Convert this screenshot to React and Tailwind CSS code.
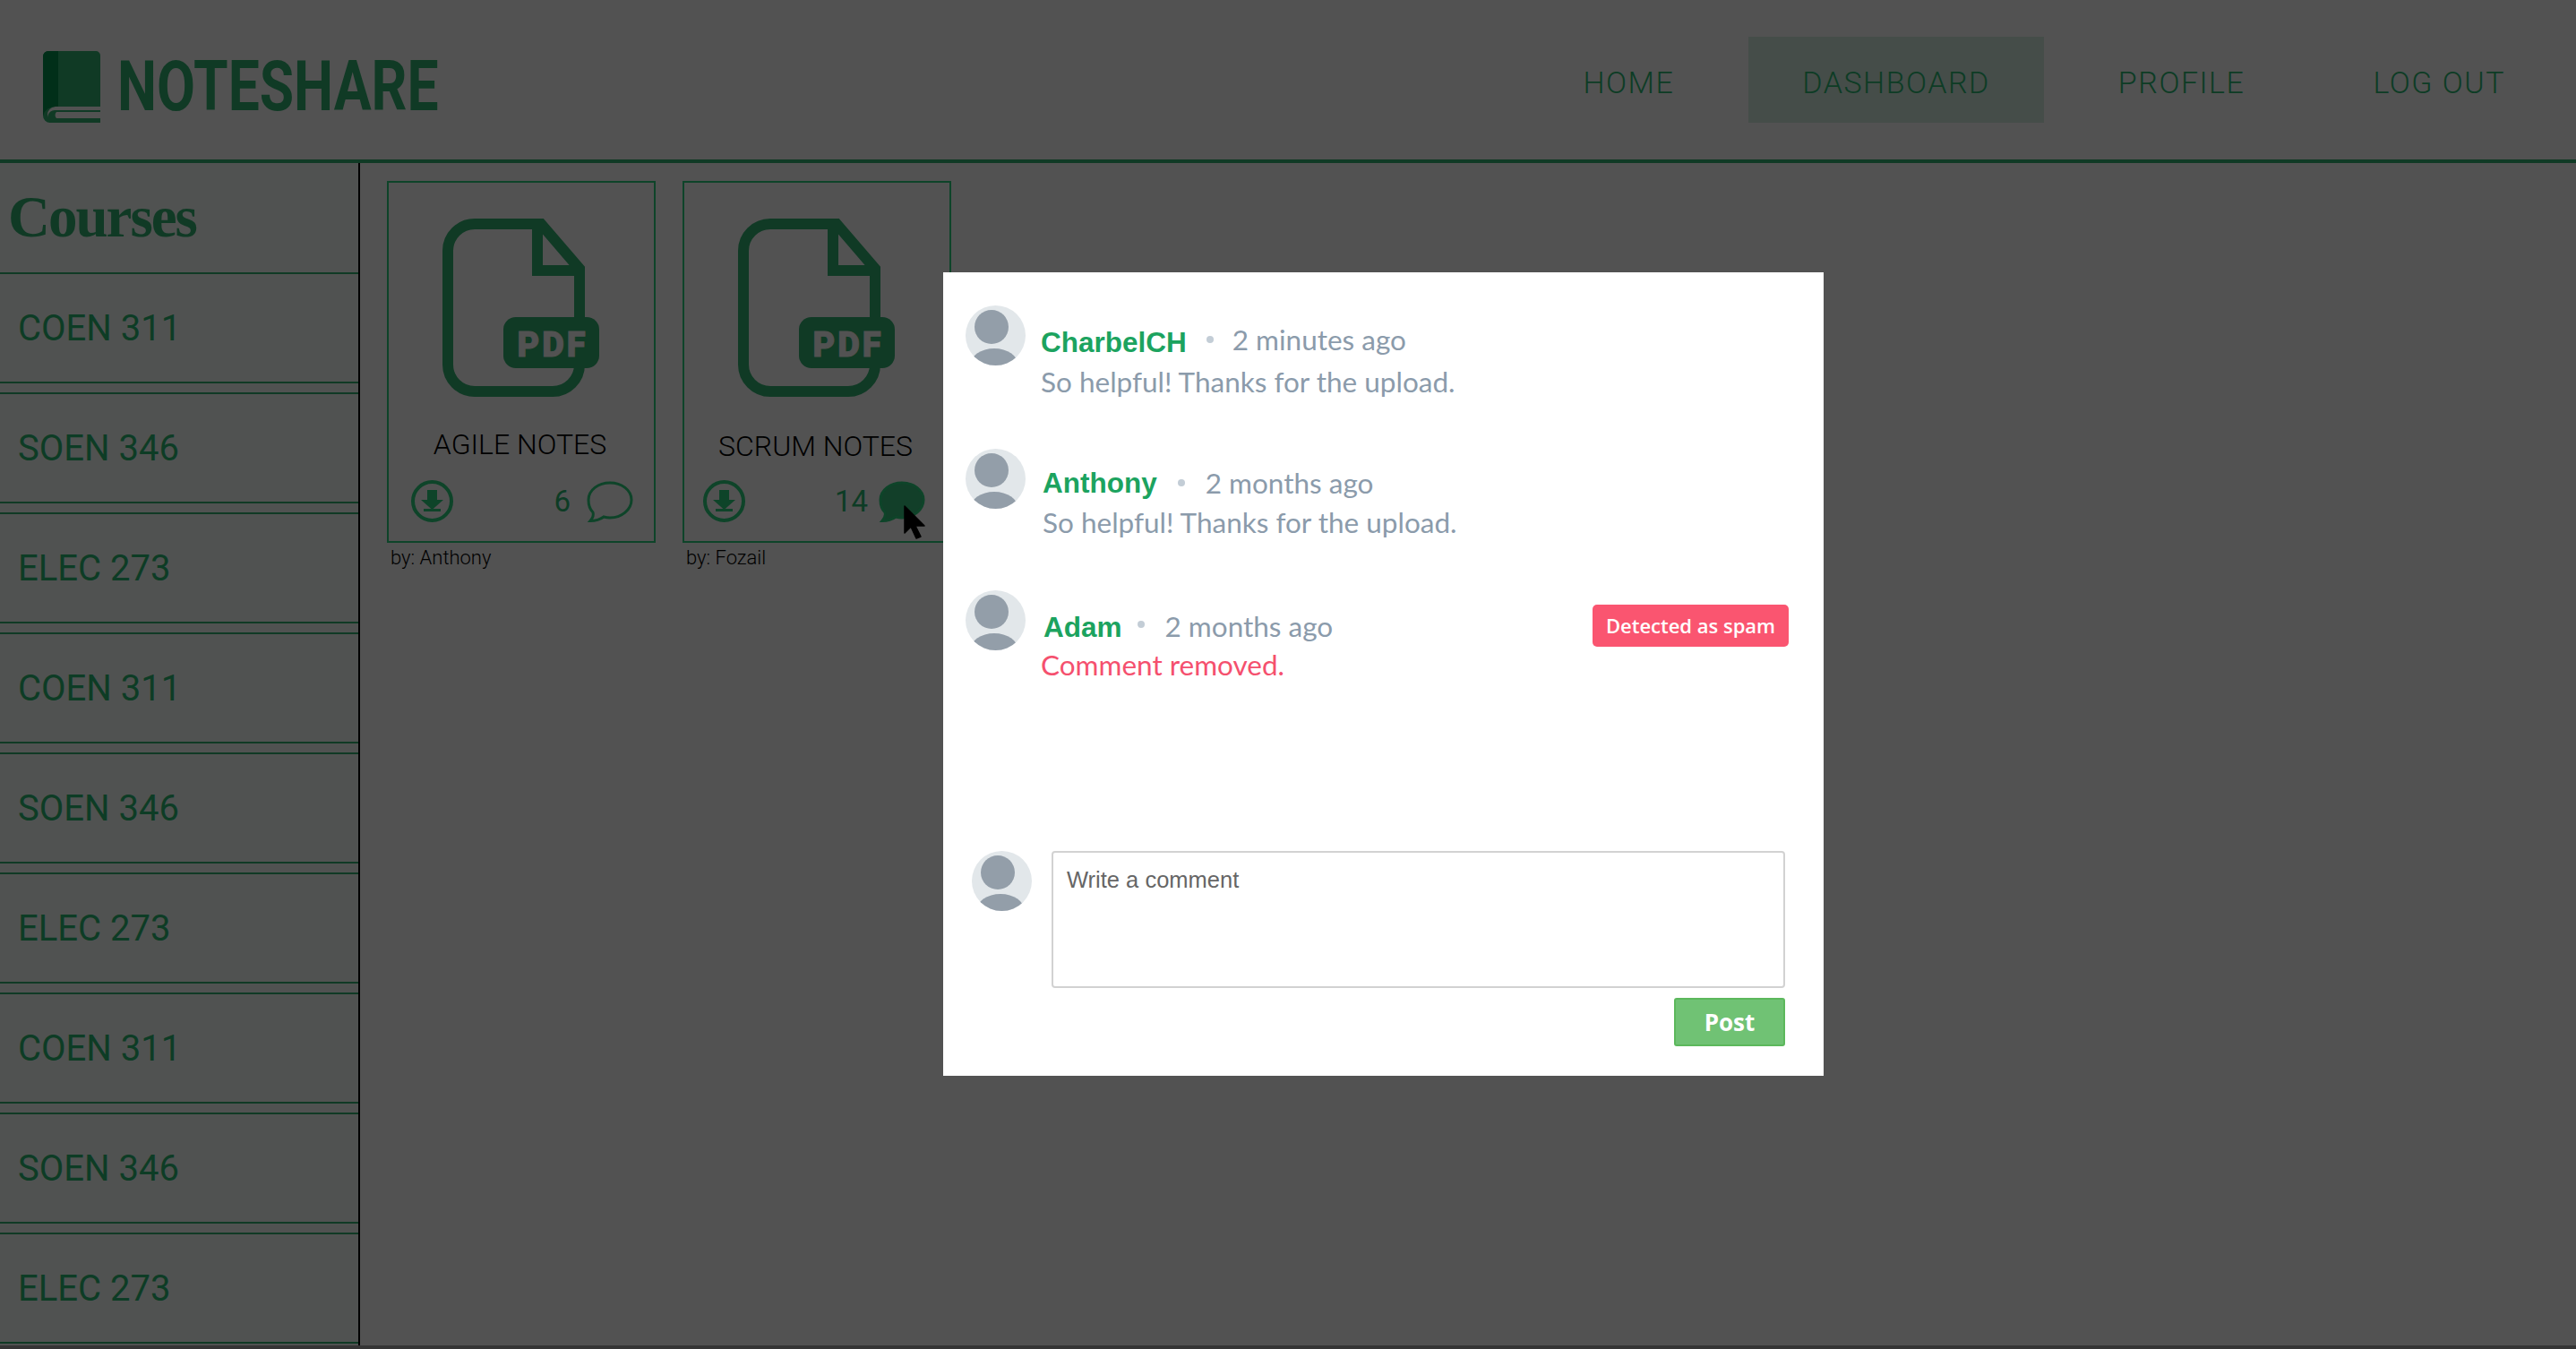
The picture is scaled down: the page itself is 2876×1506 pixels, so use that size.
const courses = ["COEN 311","SOEN 346","ELEC 273","COEN 311","SOEN 346","ELEC 273","COEN 311","SOEN 346","ELEC 273"];

function Book() {
  return (
    <svg width="65" height="80" viewBox="0 0 65 80" className="block shrink-0">
      <path d="M6 0H59a5 5 0 0 1 5 5V62H14a9 9 0 0 0 0 18H8a8 8 0 0 1-8-8V6a6 6 0 0 1 6-6Z" fill="#103a25" />
      <path d="M6 0H17V62H14a14 14 0 0 0-14 10V6a6 6 0 0 1 6-6Z" fill="#012f19" />
      <path d="M13 66H64V68H15a5 5 0 0 0 0 7H64V80H8a8 8 0 0 1 5-14Z" fill="#103a25" />
    </svg>
  );
}

function FileIcon() {
  return (
    <svg width="175" height="199" viewBox="0 0 175 199" className="block">
      <path d="M110 6H36A30 30 0 0 0 6 36V163A30 30 0 0 0 36 193H123A30 30 0 0 0 153 163V56Z" fill="none" stroke="#103a25" strokeWidth="12" />
      <path d="M106 6V58H153" fill="none" stroke="#103a25" strokeWidth="12" />
      <rect x="68" y="110" width="107" height="57" rx="14" fill="#103a25" />
      <text x="123" y="154" textAnchor="middle" fontFamily="Roboto" fontWeight="900" fontSize="38" letterSpacing="3" stroke="#525252" strokeWidth="1" fill="#525252">PDF</text>
    </svg>
  );
}

function Download() {
  return (
    <svg width="47" height="47" viewBox="0 0 47 47" className="block shrink-0">
      <circle cx="23.5" cy="23.5" r="21.5" fill="none" stroke="#0e4429" strokeWidth="4" />
      <path d="M18 11H29V22H36L23.5 33 11 22H18Z" fill="#0e4429" />
      <rect x="14" y="32" width="19" height="3" fill="#0e4429" />
    </svg>
  );
}

function Bubble({ filled }) {
  return (
    <svg width="52" height="46" viewBox="0 0 52 46" className="block shrink-0">
      <path d="M26 2C39 2 50 10 50 21S39 41 26 41C23 41 21 40.500 19 40 15 43 10 44.500 4 44.500 7 41 8 38 7 35 3 31 2 26 2 21 2 10 13 2 26 2Z" fill={filled ? "#123f29" : "none"} stroke="#0e4429" strokeWidth="3" />
    </svg>
  );
}

function Cursor() {
  return (
    <svg width="26" height="40" viewBox="0 0 26 40" className="absolute left-[1009px] top-[564px] z-10">
      <path d="M1 1L23 23 13 23 19 35 14 37 8 24 1 31Z" fill="#000" stroke="#000" strokeWidth="1.5" strokeLinejoin="round" />
    </svg>
  );
}

function Card({ title, titleTop, count, by, filled, countGap, pl, pr }) {
  return (
    <div className="w-[300px] shrink-0">
      <div className="relative h-[404px] border-2 border-[#0e4429] flex flex-col">
        <div className="pt-[40px] pl-[60px]"><FileIcon /></div>
        <div className={`text-center pr-[3px] font-['Roboto'] font-light text-[32px] leading-[38px] text-black ${titleTop}`}>{title}</div>
        <div className={`flex items-center mt-auto mb-[21px] ${pl} ${pr}`}>
          <Download />
          <span className={`ml-auto font-['Roboto'] text-[33px] leading-[40px] text-[#0d3c25] ${countGap}`}>{count}</span>
          <Bubble filled={filled} />
        </div>
      </div>
      <div className="mt-[4px] pl-[4px] font-['Roboto'] font-light text-[22px] leading-[26px] text-black">by: {by}</div>
    </div>
  );
}

function Avatar() {
  return (
    <svg width="67" height="67" viewBox="0 0 67 67" className="block shrink-0">
      <defs><clipPath id="avatar-clip"><circle cx="33.5" cy="33.5" r="33.5" /></clipPath></defs>
      <circle cx="33.5" cy="33.5" r="33.5" fill="#e2e7ea" />
      <g clipPath="url(#avatar-clip)" fill="#939ea9">
        <ellipse cx="29" cy="24" rx="19" ry="19" />
        <ellipse cx="32" cy="67" rx="27" ry="19" />
      </g>
    </svg>
  );
}

function Comment({ name, time, text, nameMl, timeMl, dotMl, height, removed, nameMt, timeMt, textMt, textMl }) {
  return (
    <div className={`flex pl-[25px] ${height}`}>
      <Avatar />
      <div className={`flex-1 ${nameMl}`}>
        <div className="flex items-start pr-[39px]">
          <span className={`font-['Liberation_Sans'] font-bold text-[31.5px] leading-[36px] text-[#1ca35f] ${nameMt}`}>{name}</span>
          <span className={`w-[8px] h-[8px] rounded-full bg-[#c3cdd6] mt-[34px] ${dotMl}`} />
          <span className={`font-['Lato'] text-[31.5px] leading-[36px] text-[#8b9bab] ${timeMl} ${timeMt}`}>{time}</span>
          {removed && (
            <span className="ml-auto mt-[16px] h-[47px] w-[219px] rounded-[5px] bg-[#fa5570] flex items-center justify-center font-['Open_Sans'] font-semibold text-[22px] text-white">Detected as spam</span>
          )}
        </div>
        <div className={`font-['Lato'] text-[31.5px] leading-[36px] ${removed ? "text-[#f5506e]" : "text-[#8b9bab]"} ${textMt} ${textMl}`}>{text}</div>
      </div>
    </div>
  );
}

export default function App() {
  return (
    <div className="relative w-[2876px] h-[1506px] bg-[#353535] overflow-hidden">
      <div className="h-[1502px] bg-[#525252] flex flex-col overflow-hidden">
        <header className="h-[182px] shrink-0 border-b-4 border-[#103a25] flex items-center justify-between pl-[48px] pr-[19px]">
          <div className="flex items-center gap-[18px] mt-[16px]">
            <Book />
            <span className="inline-block origin-left scale-x-[0.81] font-['Roboto'] font-bold text-[77px] leading-[80px] text-[#103a25]">NOTESHARE</span>
          </div>
          <nav className="flex items-center gap-[23px] font-['Roboto'] font-light text-[34px] tracking-[1.5px] text-[#0d3c25]">
            <a className="h-[96px] px-[60px] pt-[7px] flex items-center">HOME</a>
            <a className="h-[96px] px-[60px] pt-[7px] flex items-center bg-[#454d49]">DASHBOARD</a>
            <a className="h-[96px] px-[60px] pt-[7px] flex items-center">PROFILE</a>
            <a className="h-[96px] px-[60px] pt-[7px] flex items-center">LOG OUT</a>
          </nav>
        </header>
        <div className="flex flex-1 min-h-0">
          <aside className="w-[402px] shrink-0 border-r-2 border-black bg-[#505251] overflow-hidden">
            <div className="h-[122px] pl-[9px] pt-[25px] font-['Liberation_Serif'] font-bold text-[65px] leading-[70px] tracking-[-2px] text-[#103a25]">Courses</div>
            <div className="flex flex-col gap-[10px]">
              {courses.map((c, i) => (
                <div key={i} className="h-[124px] shrink-0 border-y-2 border-[#103a25] flex items-center pl-[20px] pt-[1px] font-['Roboto'] text-[40px] text-[#0d3c25]">{c}</div>
              ))}
            </div>
          </aside>
          <main className="flex-1 flex items-start gap-[30px] pl-[30px] pt-[20px]">
            <Card title="AGILE NOTES" titleTop="mt-[34px]" count="6" by="Anthony" countGap="mr-[18px]" pl="pl-[25px]" pr="pr-[23px]" />
            <Card title="SCRUM NOTES" titleTop="mt-[36px]" count="14" by="Fozail" filled countGap="mr-[12px]" pl="pl-[21px]" pr="pr-[27px]" />
          </main>
        </div>
      </div>
      <Cursor />
      <div className="absolute left-[1053px] top-[304px] z-20 w-[983px] h-[897px] bg-white pt-[37px]">
        <Comment name="CharbelCH" time="2 minutes ago" text="So helpful! Thanks for the upload." nameMl="ml-[17px]" dotMl="ml-[22px]" timeMl="ml-[21px]" height="h-[160px]" nameMt="mt-[23px]" timeMt="mt-[20px]" textMt="mt-[8px]" textMl="ml-0" />
        <Comment name="Anthony" time="2 months ago" text="So helpful! Thanks for the upload." nameMl="ml-[19px]" dotMl="ml-[23px]" timeMl="ml-[23px]" height="h-[158px]" nameMt="mt-[20px]" timeMt="mt-[20px]" textMt="mt-[8px]" textMl="ml-0" />
        <Comment name="Adam" time="2 months ago" text="Comment removed." nameMl="ml-[20px]" dotMl="ml-[17px]" timeMl="ml-[23px]" height="h-[291px]" nameMt="mt-[23px]" timeMt="mt-[22px]" textMt="mt-[2px]" textMl="-ml-[3px]" removed />
        <div className="flex pl-[32px] pr-[43px]">
          <Avatar />
          <div className="ml-[22px] flex-1 flex flex-col">
            <div className="h-[153px] border-2 border-[#d2d2d2] rounded-[4px] pl-[15px] pt-[15px] font-['Liberation_Sans'] text-[25.5px] leading-[30px] text-[#666]">Write a comment</div>
            <button className="self-end mt-[11px] w-[124px] h-[54px] rounded-[3px] border-2 border-[#5cb85c] bg-[#70c274] font-['Open_Sans'] font-bold text-[26px] text-white">Post</button>
          </div>
        </div>
      </div>
    </div>
  );
}
